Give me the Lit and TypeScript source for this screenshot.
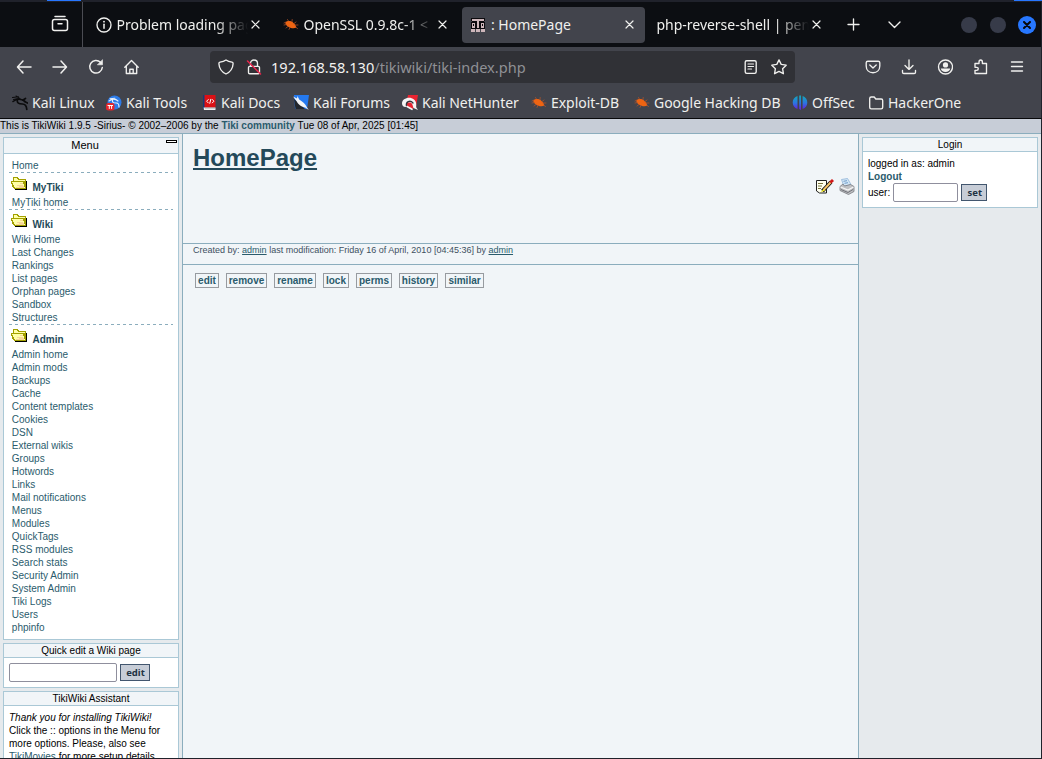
import { LitElement, html, svg, css, TemplateResult } from "lit";
import { customElement } from "lit/decorators.js";
import { styleMap } from "lit/directives/style-map.js";
import { classMap } from "lit/directives/class-map.js";

const icon = (body: TemplateResult, w = 16, h = 16) => html`<svg
  class="ic" width=${w} height=${h} viewBox="0 0 ${w} ${h}"
  fill="none" stroke="currentColor" stroke-width="1.35"
  stroke-linecap="round" stroke-linejoin="round">${body}</svg>`;

const closeX = icon(svg`<path d="M1 1l7 7M8 1l-7 7" stroke-width="1.2"/>`, 9, 9);

const beetle = icon(svg`<g stroke="none" fill="#ee6412">
  <path d="M2.500 5.200C4.500 3.400 8.500 3.600 10.500 6c1.300.9 2.300 2.200 2.900 4.600-2.300 1.100-6.300.7-8.600-1.200C3 8.300 2 6.700 2.500 5.200z"/></g>
  <g stroke="#b9552a" stroke-width=".7"><path d="M3 5L1 6M3.500 7.500L1 8M5 9.500l-2 1.500M7 10.500l-1 2M5.500 4l-1-1.500M9 4.600L9.200 2.500M11 6.500l2-1.500M12 8h3M12.500 10l2 1.500"/></g>`);

const tikiIcon = icon(svg`<g stroke="none" shape-rendering="crispEdges">
  <path fill="#0c0b0e" d="M1 1h14v11H1z"/>
  <path fill="#cdb6ba" d="M2 2h12v2H2zM2 6h3v5H2zM7 4h2v7H7zM11 6h3v5h-3zM1 12h4v3H1zM6 12h4v3H6zM11 12h4v3h-4z"/>
  <path fill="#0c0b0e" d="M3 7h1v2H3zM12 7h1v2h-1z"/><path fill="#42444c" d="M1 4h1v1H1zM14 4h1v1h-1z"/></g>`);

const infoIcon = icon(svg`<circle cx="8" cy="8" r="7"/><path d="M8 7.300v4" stroke-width="1.500"/><path d="M8 4.600v.1" stroke-width="1.800"/>`);

const BM: Record<string, TemplateResult> = {
  dragon: icon(svg`<g stroke="#0b0b0c"><path d="M0.500 2.500l6-.7M1.500 4.500l5-1M4 1l4 2.600" stroke-width="1.100"/><path d="M1 6.500C5 3.400 9 3.600 13 6.400" stroke-width="1.500"/><path d="M5.500 4.500C4.500 8 7 9 10.500 9c3 0 4 1.500 4.300 5.500M11 5l2.500-1.500M12.500 6.500l3 1.500" stroke-width="1.700"/></g>`),
  tools: icon(svg`<g stroke="none"><circle cx="8.500" cy="7.500" r="7" fill="#2c7be8"/></g>
    <path d="M3 6c4-3 7-2 9 0M6.500 5c-.5 3 1.500 3 4 3 2 0 2.500 2 2.500 4M4 3.800l5-.6" stroke="#e8f0fa" stroke-width="1.100"/>
    <rect x="0" y="8" width="8.500" height="7.500" rx="2.500" fill="#e4262c" stroke="none"/><path d="M2 10.500h4.600M3.300 10.500v3M5.600 10.500v3" stroke="#fff" stroke-width="1"/>`),
  docs: icon(svg`<g stroke="none"><path fill="#173a78" d="M2 0h2v14H2z"/><path fill="#dc1014" d="M3.500 0H14.500v12.500H3.500z"/><path fill="#eee" d="M2.500 12.500H14.500V15H3z"/><path fill="#aaa" d="M4 13.500h10v.5H4z"/></g>
    <path d="M7.300 4.500L5.600 6.200 7.300 7.900M11.300 4.500l1.600 1.700L11.300 7.900M9.800 4.300l-1 4" stroke="#fff" stroke-width="1"/>`),
  forums: icon(svg`<path fill="#2479ef" stroke="none" d="M1 0h15l-2 14H2z"/><path fill="#23272d" stroke="none" d="M1 4l1.500 10H12L6 8z"/><path fill="#f3f5f7" stroke="none" d="M0 1.500l4 2 .5-2.500 1.700 3.500c3.500 2 6.500 5 7.500 7.500l2 3-3.500-2.500C9 12 5 9.500 3.500 6z"/>`),
  net: icon(svg`<path fill="#e82431" stroke="none" d="M6 0h10l-2 12-4 2-6-3z"/><path fill="#f5f5f5" stroke="none" d="M0 8.500C0 3.500 7.500 1 12 4.500c3 2.500 2 5.500 2.300 8l1.700 2.500-4.500-2c-1-3-1-5.500-4-5.500-3 0-4 2-3 4.500C1.500 12.500 0 10.500 0 8.500z"/><path d="M4.500 11C3.500 7 8 4.500 11 8" stroke="#34333a" stroke-width="1.300"/><path d="M5 11.500l5 2.800" stroke="#f5f5f5" stroke-width="1.600"/>`),
  bug: beetle,
  offsec: html`<svg class="ic" width="16" height="16" viewBox="0 0 16 16"><defs><linearGradient id="o" x1="0" y1="0" x2="0" y2="1"><stop offset="0" stop-color="#12a9b8"/><stop offset=".5" stop-color="#2a78e0"/><stop offset="1" stop-color="#6a16e0"/></linearGradient></defs><path fill="url(#o)" d="M5.500 1v13C2.500 13 .7 10.500 .7 7.500S2.500 2 5.500 1zM7.200.500h1.800V15L7.200 14zM10.600 1c3 1 4.700 3.500 4.700 6.500s-1.700 5.500-4.700 6.500z"/></svg>`,
  folder: icon(svg`<path d="M1.700 3.500c0-1 .5-1.500 1.500-1.500h3l1.600 2h5.400c1 0 1.500.5 1.500 1.500v6.800c0 1-.5 1.500-1.500 1.500H3.200c-1 0-1.500-.5-1.500-1.500z"/>`),
};

const bookmarks: [string, string, number][] = [
  ["dragon", "Kali Linux", 94], ["tools", "Kali Tools", 95], ["docs", "Kali Docs", 92],
  ["forums", "Kali Forums", 109], ["net", "Kali NetHunter", 129], ["bug", "Exploit-DB", 103],
  ["bug", "Google Hacking DB", 158], ["offsec", "OffSec", 76], ["folder", "HackerOne", 100],
];

const tabs = [
  { ic: infoIcon, t: "Problem loading pag", on: false, fade: true },
  { ic: beetle, t: "OpenSSL 0.9.8c-1 <", on: false, fade: true },
  { ic: tikiIcon, t: ": HomePage", on: true, fade: false },
  { ic: null, t: "php-reverse-shell | pen", on: false, fade: true },
];

@customElement("browser-chrome")
class BrowserChrome extends LitElement {
  static styles = css`
    :host { display: block; font: 14px/20px "Noto Sans", sans-serif; color: #f0f0ee; }
    .ic { display: block; flex: none; }
    .edge { height: 2px; background: #20222b; display: flex; }
    .e1 { width: 34px; margin-left: 47px; height: 1px; background: #2777ff; }
    .e2 { width: 28px; margin-left: auto; height: 1px; background: #2777ff; }
    .tabs { height: 45px; background: #0c0e12; display: flex; align-items: center; border-right: 1px solid #20222b; }
    .view { width: 83px; flex: none; height: 45px; box-sizing: border-box; padding: 13px 0 0 51px; border-right: 1px solid #4b4c53; margin-right: 4px; }
    .tab { width: 183px; flex: none; height: 36px; margin-right: 4px; box-sizing: border-box; padding: 0 11px 0 8px; display: flex; align-items: center; border-radius: 4px; position: relative; left: .5px; }
    .on { background: #42444c; left: 1px; }
    .tt { flex: 1; min-width: 0; margin: 0 0 0 5px; white-space: nowrap; letter-spacing: -.02px; }
    .fade { -webkit-mask-image: linear-gradient(90deg, #000 calc(100% - 36px), transparent 98%); mask-image: linear-gradient(90deg, #000 calc(100% - 36px), transparent 98%); }
    .tab .noic { margin-left: 0; }
    .plus { margin-left: 12px; }
    .chev { margin-left: 28px; margin-right: auto; }
    .dot { width: 16px; height: 16px; border-radius: 50%; background: #373b49; margin-right: 13px; }
    .cl { width: 18px; height: 18px; border-radius: 50%; background: #2777ff; color: #08090c; display: flex; align-items: center; justify-content: center; margin: 0 5px 0 -1px; }
    .nav { height: 40px; background: #42444c; display: flex; align-items: center; padding-left: 16px; box-sizing: border-box; border-right: 1px solid #20222b; }
    .nav > .ic { margin-right: 20px; }
    .url { width: 585px; flex: none; height: 32px; margin: 0 70px 0 50px; background: #303136; border-radius: 4px; display: flex; align-items: center; box-sizing: border-box; padding: 0 8px; }
    .url .ic + .ic { margin-left: 12px; }
    .addr { flex: 1; margin-left: 9px; font-size: 14.560px; color: #8f9095; }
    .host { color: #f3f3f1; }
    .bm { height: 31px; background: #42444c; border-bottom: 1px solid #08090b; border-right: 1px solid #20222b; display: flex; align-items: center; padding-left: 12px; letter-spacing: -.04px; }
    .b { display: flex; align-items: center; gap: 4px; white-space: nowrap; flex: none; }
  `;
  render() {
    return html`
      <div class="edge"><div class="e1"></div><div class="e2"></div></div>
      <div class="tabs">
        <div class="view">${icon(svg`<path d="M4 1.500h10M3.500 4.500h11c1.200 0 2 .8 2 2v7c0 1.200-.8 2-2 2h-11c-1.200 0-2-.8-2-2v-7c0-1.200.8-2 2-2zM7 8.800h4" stroke-width="1.500"/>`, 18, 18)}</div>
        ${tabs.map((t) => html`<div class=${classMap({ tab: true, on: t.on })}>${t.ic}<span class=${classMap({ tt: true, fade: t.fade, noic: !t.ic })}>${t.t}</span>${closeX}</div>`)}
        <span class="plus">${icon(svg`<path d="M6.500 1v11M1 6.500h11"/>`, 13, 13)}</span>
        <span class="chev">${icon(svg`<path d="M1 1l5.500 5.500L12 1"/>`, 13, 8)}</span>
        <span class="dot"></span><span class="dot"></span>
        <span class="cl">${icon(svg`<path d="M1 1l6 6M7 1L1 7" stroke-width="2"/>`, 8, 8)}</span>
      </div>
      <div class="nav">
        ${icon(svg`<path d="M7 2L1.500 8 7 14M2 8h13" stroke-width="1.500"/>`)}
        ${icon(svg`<path d="M9 2l5.500 6L9 14M14 8H1" stroke-width="1.500"/>`)}
        ${icon(svg`<path d="M14.300 8.500A6.300 6.300 0 1 1 12.500 3.300" stroke-width="1.500"/><path d="M14.500 1v4.800H9.700z" fill="currentColor" stroke-width=".6"/>`)}
        ${icon(svg`<path d="M.8 8.300L7.500 1.500l6.700 6.800M2.300 7v7.500h10.400V7M5.800 14v-3.800h3.400V14"/>`)}
        <div class="url">
          ${icon(svg`<path d="M8 1c2 1.400 4 1.900 6 2.200.9.2 1.200.6 1.100 1.600C14.800 9.500 12.500 13 8 15 3.500 13 1.200 9.500.9 4.800.8 3.800 1.100 3.400 2 3.200 4 2.900 6 2.400 8 1z"/>`)}
          ${icon(svg`<path d="M2.500 8.500c0-.8.4-1.200 1.200-1.200h8.600c.8 0 1.200.4 1.200 1.200v5c0 .8-.4 1.200-1.200 1.200H3.700c-.8 0-1.200-.4-1.200-1.200zM4.500 7V4.500C4.500 2.500 6 1 8 1s3.500 1.500 3.500 3.500V7"/><path d="M1.500 2L14.500 15" stroke="#e8254c" stroke-width="1.500"/>`)}
          <span class="addr"><span class="host">192.168.58.130</span>/tikiwiki/tiki-index.php</span>
          ${icon(svg`<rect x="2.200" y="1.700" width="11" height="12.600" rx="1.500"/><path d="M5 5h5.500M5 7.500h5.500M5 10h3.500" stroke-width="1.200"/>`)}
          ${icon(svg`<path d="M8 .9l2.200 4.500 5 .8-3.600 3.500.8 5L8 12.400l-4.400 2.300.8-5L.8 6.200l5-.8z"/>`)}
        </div>
        ${icon(svg`<path d="M2.800 2.200h10.400c1 0 1.600.6 1.600 1.600V7c0 4-2.800 6.700-6.800 6.700S1.200 11 1.200 7V3.800c0-1 .6-1.600 1.600-1.600zM4.800 6L8 9l3.200-3"/>`)}
        ${icon(svg`<path d="M8 .8v9.400M4 6.500l4 3.900 4-3.900M1.500 11.500v1.700c0 .8.400 1.300 1.300 1.300h10.400c.9 0 1.300-.5 1.300-1.300v-1.700"/>`)}
        ${icon(svg`<circle cx="8.500" cy="8" r="7"/><g fill="currentColor" stroke="none"><circle cx="8.500" cy="5.900" r="2.600"/><path d="M3.800 9.600h9.400c-.3 2-2.300 3.400-4.700 3.400s-4.400-1.400-4.700-3.400z"/></g>`)}
        ${icon(svg`<path d="M2 4.500h4V3.200C6 2 6.600 1 7.700 1s1.700 1 1.700 2.200v1.300h4.100v10H2v-3.200h1.700c1 0 1.600-.6 1.600-1.500S4.700 8.300 3.700 8.300H2z"/>`)}
        ${icon(svg`<path d="M2.500 3h11M2.500 7.500h11M2.500 12h11"/>`)}
      </div>
      <div class="bm">${bookmarks.map(([i, t, w]) => html`<span class="b" style=${styleMap({ width: `${w}px` })}>${BM[i]}<span>${t}</span></span>`)}</div>`;
  }
}

const folder = html`<svg width="17" height="15" viewBox="0 0 17 15" shape-rendering="crispEdges">
  <path fill="#000" d="M4 12h11V4h1v9H4z"/>
  <path fill="#a3a000" d="M2 0h5l1 2h7v3h0v6l-1 1H3L2 11 0 6V4h2z"/>
  <path fill="#ffffa8" d="M3 1h3l1 2h7v1H3zM1 5h11l2 6H4z"/>
  <path fill="#a3a000" d="M1 4h11v1H1z"/>
  <path fill="#f7d79a" d="M6 8h6v1H6zM5 10h8v1H5zM9 6h3v1H9zM8 9h5v1H8z"/></svg>`;

const sections: { title?: string; items: string[] }[] = [
  { items: ["Home"] },
  { title: "MyTiki", items: ["MyTiki home"] },
  { title: "Wiki", items: ["Wiki Home", "Last Changes", "Rankings", "List pages", "Orphan pages", "Sandbox", "Structures"] },
  { title: "Admin", items: ["Admin home", "Admin mods", "Backups", "Cache", "Content templates", "Cookies", "DSN", "External wikis", "Groups", "Hotwords", "Links", "Mail notifications", "Menus", "Modules", "QuickTags", "RSS modules", "Search stats", "Security Admin", "System Admin", "Tiki Logs", "Users", "phpinfo"] },
];

@customElement("tiki-page")
class TikiPage extends LitElement {
  static styles = css`
    :host { display: flex; flex-direction: column; flex: 1; min-height: 0; overflow: hidden; font: 10px/13px "Liberation Sans", Arial, sans-serif; color: #000; background: #e6eaed; border-right: 1px solid #20222b; border-bottom: 1px solid #20222b; box-sizing: border-box; }
    a { color: #2a5b6c; }
    .top { height: 14px; background: #c7cdd7; border-bottom: 1px solid #8badbd; white-space: nowrap; flex: none; letter-spacing: .013px; }
    .top b, .login b { color: #2a5b6c; }
    .cols { display: flex; flex: 1; min-height: 0; }
    .left { width: 182px; padding: 3px 3px 0 3px; box-sizing: border-box; flex: none; overflow: hidden; }
    .right { width: 182px; padding: 3px 3px 0; box-sizing: border-box; flex: none; }
    .mid { flex: 1; background: #f1f5f8; border: solid #8badbd; border-width: 0 1px; }
    .box { border: 1px solid #aac8d6; background: #fff; margin-bottom: 3px; }
    .hd { height: 13px; background: #f1f5f8; border-bottom: 1px solid #aac8d6; text-align: center; line-height: 13px; }
    .menuhd { height: 15px; font-size: 11px; line-height: 15px; display: flex; }
    .menuhd span { flex: 1; }
    .min { width: 9px; height: 1px; border: 1px solid #000; margin: 2px 1px 0 0; background: #fff; }
    .menu { padding: 5px 5px; }
    .items { padding-left: 3px; }
    .items a { display: block; text-decoration: none; margin-left: -.2px; letter-spacing: .01px; }
    .sep { display: block; height: 1px; background: repeating-linear-gradient(90deg, #8badbd 0 2.700px, transparent 2.700px 6px); }
    .sec { height: 23px; display: flex; align-items: flex-start; padding-left: 2px; box-sizing: border-box; padding-top: 4px; gap: 4.500px; color: #1f4b5a; font-weight: bold; }
    .sec span { padding-top: 4px; }
    .form { display: flex; align-items: center; gap: 3px; }
    .qe { padding: 5px; }
    .in { box-sizing: border-box; height: 19px; border: 1px solid #8f8f9d; border-radius: 2px; background: #fff; }
    .in.w { width: 108px; }
    .in.s { width: 65px; }
    .btn { box-sizing: border-box; height: 17px; border: 1px solid #42566e; background: #c7cdd7; font: bold 9.500px/15px "Noto Sans", sans-serif; color: #223344; text-align: center; padding-left: 1px; }
    .btn.w { width: 30px; }
    .btn.s { width: 26px; }
    .as { padding: 5px; white-space: nowrap; }
    .login { padding: 5px; height: 45px; }
    .title { margin: 0; padding: 9px 0 0 10px; font-size: 24px; line-height: 29px; height: 44px; box-sizing: border-box; }
    .title a { color: #24495a; }
    .acts { display: flex; justify-content: flex-end; gap: 4px; padding-right: 3px; height: 65px; }
    .info { height: 20px; border: solid #8badbd; border-width: 1px 0; padding-left: 10px; font-size: 9px; line-height: 12px; color: #40505f; letter-spacing: .004px; }
    .bar { display: flex; gap: 7px; padding: 8px 12px; }
    .bar a { box-sizing: border-box; height: 15px; border: 1px solid #979ba0; font-weight: bold; text-align: center; line-height: 13px; }
  `;
  render() {
    const buttons: [string, number][] = [["edit", 24], ["remove", 41], ["rename", 42], ["lock", 26], ["perms", 36], ["history", 39], ["similar", 39]];
    return html`
      <div class="top">This is TikiWiki 1.9.5 -Sirius- © 2002–2006 by the <b>Tiki community</b> Tue 08 of Apr, 2025 [01:45]</div>
      <div class="cols">
        <div class="left">
          <div class="box">
            <div class="hd menuhd"><span>Menu</span><i class="min"></i></div>
            <div class="menu">
              ${sections.map((s, i) => html`
                ${i ? html`<i class="sep"></i>` : ""}
                ${s.title ? html`<div class="sec">${folder}<span>${s.title}</span></div>` : ""}
                <div class="items">${s.items.map((t) => html`<a>${t}</a>`)}</div>`)}
            </div>
          </div>
          <div class="box">
            <div class="hd">Quick edit a Wiki page</div>
            <div class="form qe"><span class="in w"></span><span class="btn w">edit</span></div>
          </div>
          <div class="box">
            <div class="hd">TikiWiki Assistant</div>
            <div class="as"><i>Thank you for installing TikiWiki!</i><br>Click the :: options in the Menu for<br>more options. Please, also see<br><a><u>TikiMovies</u></a> for more setup details.</div>
          </div>
        </div>
        <div class="mid">
          <h1 class="title"><a><u>HomePage</u></a></h1>
          <div class="acts">
            <svg width="20" height="17" viewBox="0 0 20 17"><path d="M1.500 2.500h10v12.500h-7l-3-2z" fill="#fffff0" stroke="#222"/><path d="M3 5.500h5M3 8h4M3 10.500h3" stroke="#77743c"/><path d="M7.500 13l8.500-9" stroke="#111" stroke-width="3.800"/><path d="M8.500 12l7.500-8" stroke="#f5c46b" stroke-width="2"/><path d="M15.300 4.500L18 2" stroke="#d01818" stroke-width="3"/><path d="M5.500 14.500l3-3.500 1.500 1.500z" fill="#f0e818"/></svg>
            <svg width="16" height="17" viewBox="0 0 16 17"><path d="M2.500 1.500l6-1 3.500 6-7 2z" fill="#d3e6f6" stroke="#8fb4d8" stroke-width=".8"/><path d="M4.500 3.300l3.500-.6M5.500 5.300l3.500-.6" stroke="#6f9cc8"/><path d="M1 8.500l3-2.500 1.500 2 6-1.500 3.500 2v5l-5.500 3-8.500-4z" fill="#bfc0c3" stroke="#77787d" stroke-width=".8"/><path d="M1.500 9L9 12l5.500-3" stroke="#f6f6f6" fill="none" stroke-width="1.300"/><path d="M2 11.500l7 3 5-3" stroke="#66686e" fill="none" stroke-width=".9"/></svg>
          </div>
          <div class="info">Created by: <a><u>admin</u></a> last modification: Friday 16 of April, 2010 [04:45:36] by <a><u>admin</u></a></div>
          <div class="bar">${buttons.map(([t, w]) => html`<a style=${styleMap({ width: `${w}px` })}>${t}</a>`)}</div>
        </div>
        <div class="right">
          <div class="box">
            <div class="hd">Login</div>
            <div class="login">logged in as: admin<br><b>Logout</b>
              <div class="form">user: <span class="in s"></span><span class="btn s">set</span></div>
            </div>
          </div>
        </div>
      </div>`;
  }
}

@customElement("app-root")
class AppRoot extends LitElement {
  static styles = css`:host { display: flex; flex-direction: column; width: 1042px; height: 759px; overflow: hidden; }`;
  render() {
    return html`<browser-chrome></browser-chrome><tiki-page></tiki-page>`;
  }
}
